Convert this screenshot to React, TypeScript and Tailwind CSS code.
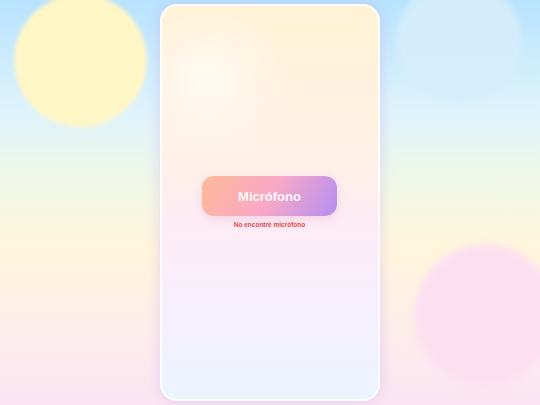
export default function App() {
  return (
    <div className="relative w-full h-[405px] overflow-hidden bg-[linear-gradient(180deg,#b8e3fd_0%,#def3fc_27%,#f3f8e4_48%,#fff6dc_62%,#fdeeea_80%,#fce4f3_100%)] font-['Liberation_Sans',Arial,sans-serif]">
      <div className="absolute left-[14px] top-[-6px] w-[133px] h-[133px] rounded-full bg-[#fff6c6] blur-[2px]" />
      <div className="absolute left-[397px] top-[-21px] w-[124px] h-[124px] rounded-full bg-[#d6eefd] blur-[3px] opacity-90" />
      <div className="absolute left-[414px] top-[244px] w-[142px] h-[142px] rounded-full bg-[#fde0f0] blur-[3px]" />
      <div className="relative flex justify-center pt-1">
        <div className="relative w-[220px] h-[397px] rounded-[17px] border-2 border-white/90 shadow-[0_0_14px_rgba(196,160,240,0.4)] overflow-hidden bg-[linear-gradient(180deg,#fff2d4_0%,#fff1e4_35%,#fdecf5_55%,#f7effc_75%,#ebf4ff_100%)]">
          <div className="absolute left-[-50px] top-[-20px] w-[190px] h-[190px] rounded-full bg-[radial-gradient(circle,rgba(255,255,255,0.7)_0%,rgba(255,255,255,0.25)_35%,rgba(255,255,255,0)_68%)]" />
          <div className="relative flex flex-col items-center justify-center h-full gap-[5px] pr-[1px]">
            <button className="w-[135px] h-[40px] rounded-[12px] bg-[linear-gradient(120deg,#fdb996_0%,#f9a8c6_50%,#b48ff2_100%)] shadow-[0_3px_10px_rgba(236,150,200,0.3)] text-white/95 text-[13px] font-bold leading-none">
              Micrófono
            </button>
            <p className="text-[6.5px] leading-[8px] font-bold text-[#e5484d]">No encontré micrófono</p>
          </div>
        </div>
      </div>
    </div>
  );
}
